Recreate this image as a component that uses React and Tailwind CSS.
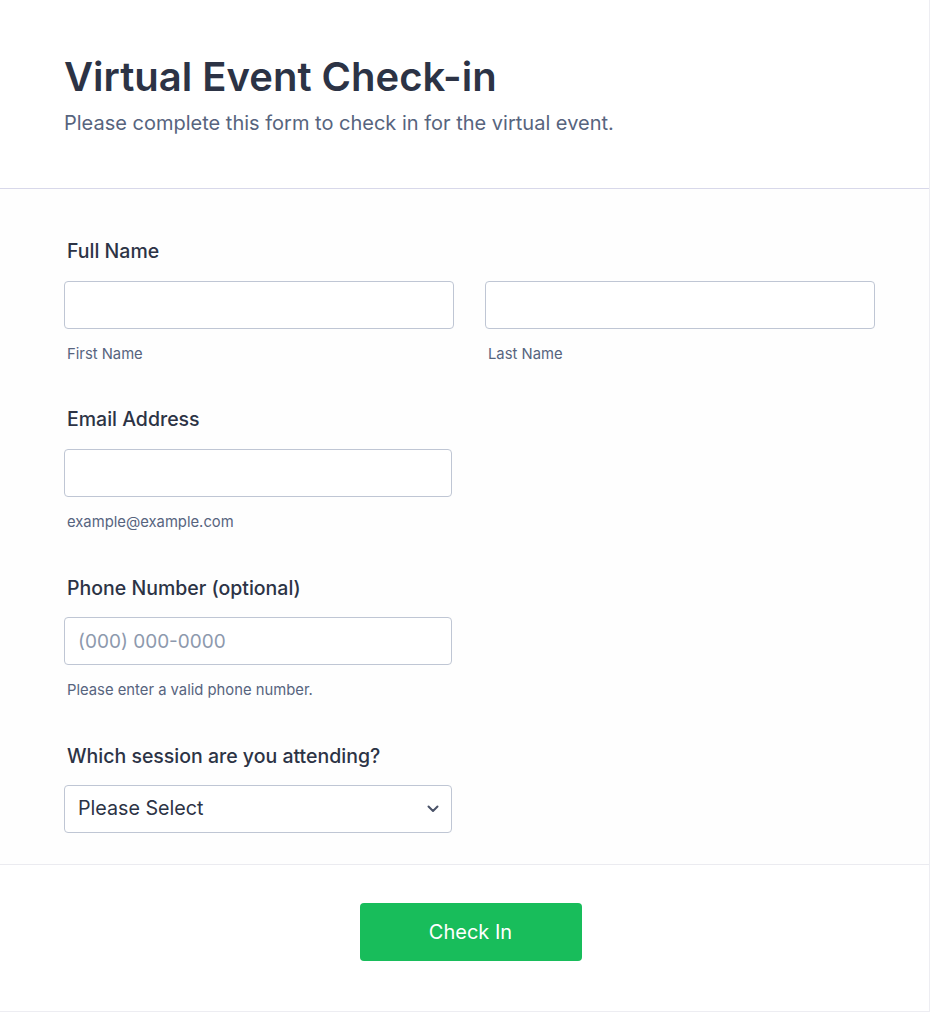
import React from "react";

const labelCls = "block pl-[3px] text-[19.5px] leading-7 font-medium text-[#2c3345]";
const inputCls = "block w-full h-12 rounded-[4px] border border-[#bfc6d4] bg-white px-[13px] text-[19px] text-[#2c3345] placeholder:text-[#8d99ad] outline-none";
const subCls = "block pl-[3px] mt-[15px] text-[14.8px] leading-5 text-[#57647e]";

export default function App() {
  return (
    <div className="w-[930px] min-h-[1012px] bg-white font-['Inter',sans-serif]">
      <div className="h-[1012px] border-r border-b border-[#ededf2] flex flex-col">
        {/* header */}
        <div className="px-16 pt-[53px] pb-[51px] border-b border-[#d8d8ea]">
          <h1 className="text-[40px] leading-[48px] font-semibold text-[#2c3345]">Virtual Event Check-in</h1>
          <p className="mt-[8px] text-[20px] leading-7 text-[#57647e]">Please complete this form to check in for the virtual event.</p>
        </div>

        {/* fields */}
        <div className="px-16 pt-[48px] pb-[31px] border-b border-[#ebebf0] flex flex-col bg-[#fefefe]">
          <div>
            <label className={labelCls}>Full Name</label>
            <div className="mt-[16px] flex gap-[31px] w-[811px]">
              <div className="flex-1">
                <input className={inputCls} />
                <span className={subCls}>First Name</span>
              </div>
              <div className="flex-1">
                <input className={inputCls} />
                <span className={subCls}>Last Name</span>
              </div>
            </div>
          </div>

          <div className="w-[388px] mt-[41px]">
            <label className={labelCls}>Email Address</label>
            <input className={inputCls + " mt-[16px]"} />
            <span className={subCls}>example@example.com</span>
          </div>

          <div className="w-[388px] mt-[42px]">
            <label className={labelCls}>Phone Number (optional)</label>
            <input className={inputCls + " mt-[15px]"} placeholder="(000) 000-0000" />
            <span className={subCls}>Please enter a valid phone number.</span>
          </div>

          <div className="w-[388px] mt-[42px]">
            <label className={labelCls}>Which session are you attending?</label>
            <div className="relative mt-[15px]">
              <div className="h-12 rounded-[4px] border border-[#bfc6d4] bg-white pl-[13px] flex items-center text-[19.7px] text-[#2c3345]">
                Please Select
              </div>
              <svg className="absolute right-[13px] top-[20px]" width="12" height="8" viewBox="0 0 12 8" fill="none">
                <path d="M1.5 1.5 L6 6 L10.5 1.5" stroke="#4a5268" strokeWidth="2" strokeLinecap="round" strokeLinejoin="round" />
              </svg>
            </div>
          </div>
        </div>

        {/* submit */}
        <div className="flex justify-center pl-3 pt-[38px]">
          <button className="w-[222px] h-[58px] rounded-[4px] bg-[#18bd5b] text-white text-[20px] font-normal">
            Check In
          </button>
        </div>
      </div>
    </div>
  );
}
